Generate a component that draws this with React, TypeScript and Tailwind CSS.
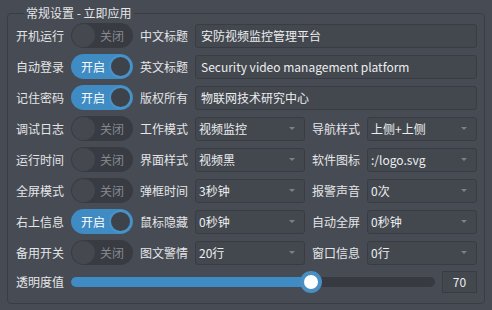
import React from 'react';

const font = { fontFamily: '"Noto Sans CJK SC", "Liberation Sans", sans-serif' };

const Switch = ({ on }: { on: boolean }) =>
  on ? (
    <div className="flex items-center justify-between w-[62px] h-[25px] rounded-full bg-[#3f8bc4] pl-[10px] pr-[1px] shrink-0">
      <span className="text-white text-[12px]">开启</span>
      <span className="w-[23px] h-[23px] rounded-full bg-[#3e424a] border-2 border-[#4a93c9]" />
    </div>
  ) : (
    <div className="flex items-center justify-between w-[62px] h-[25px] rounded-full bg-[#383b42] pl-[1px] pr-[9px] shrink-0">
      <span className="w-[23px] h-[23px] rounded-full bg-[#45484f]" />
      <span className="text-[#86898f] text-[12px]">关闭</span>
    </div>
  );

const Label = ({ text }: { text: string }) => (
  <span className="w-[48px] shrink-0 text-[12px] text-[#e4e6e8] whitespace-nowrap">{text}</span>
);

const Input = ({ value }: { value: string }) => (
  <div className="flex-1 h-[24px] flex items-center px-[5px] rounded-[3px] bg-[#43474e] border border-[#393c43] text-[12px] text-[#eceef0] whitespace-nowrap overflow-hidden">
    {value}
  </div>
);

const Combo = ({ value }: { value: string }) => (
  <div className="flex-1 h-[24px] flex items-center justify-between pl-[3px] pr-[9px] rounded-[3px] bg-[#43474e] border border-[#393c43] text-[12px] text-[#eceef0] whitespace-nowrap">
    <span>{value}</span>
    <span className="w-0 h-0 border-l-[3px] border-r-[3px] border-t-[3px] border-l-transparent border-r-transparent border-t-[#7d8087]" />
  </div>
);

const textRows = [
  { label: '开机运行', on: false, l2: '中文标题', value: '安防视频监控管理平台' },
  { label: '自动登录', on: true, l2: '英文标题', value: 'Security video management platform' },
  { label: '记住密码', on: true, l2: '版权所有', value: '物联网技术研究中心' },
];

const comboRows = [
  { label: '调试日志', on: false, l2: '工作模式', v1: '视频监控', l3: '导航样式', v2: '上侧+上侧' },
  { label: '运行时间', on: false, l2: '界面样式', v1: '视频黑', l3: '软件图标', v2: ':/logo.svg' },
  { label: '全屏模式', on: false, l2: '弹框时间', v1: '3秒钟', l3: '报警声音', v2: '0次' },
  { label: '右上信息', on: true, l2: '鼠标隐藏', v1: '0秒钟', l3: '自动全屏', v2: '0秒钟' },
  { label: '备用开关', on: false, l2: '图文警情', v1: '20行', l3: '窗口信息', v2: '0行' },
];

export default function App() {
  return (
    <div className="w-[492px] h-[310px] bg-[#474b53] pt-[5px] px-[7px]" style={font}>
      <fieldset className="border border-[#3a3d44] rounded-[4px] pl-[8px] pr-[7px] pb-[7px] h-[299px]">
        <legend className="ml-[8px] px-[2px] text-[12px] text-[#e4e6e8] leading-[16px]">常规设置 - 立即应用</legend>
        <div className="flex flex-col gap-[6px] pt-[2px]">
          {textRows.map((r) => (
            <div key={r.label} className="flex items-center gap-[7px]">
              <Label text={r.label} />
              <Switch on={r.on} />
              <Label text={r.l2} />
              <Input value={r.value} />
            </div>
          ))}
          {comboRows.map((r) => (
            <div key={r.label} className="flex items-center gap-[7px]">
              <Label text={r.label} />
              <Switch on={r.on} />
              <Label text={r.l2} />
              <Combo value={r.v1} />
              <Label text={r.l3} />
              <Combo value={r.v2} />
            </div>
          ))}
          <div className="flex items-center gap-[7px]">
            <Label text="透明度值" />
            <div className="relative flex-1 h-[22px] flex items-center">
              <div className="w-full h-[10px] rounded-full bg-[#373a41] overflow-hidden">
                <div className="h-full bg-[#3f8bc4]" style={{ width: '66%' }} />
              </div>
              <span
                className="absolute top-0 w-[22px] h-[22px] rounded-full bg-white border-[4px] border-[#4a8fc4]"
                style={{ left: 'calc(66% - 11px)' }}
              />
            </div>
            <div className="w-[35px] h-[22px] flex items-center justify-center bg-[#43474e] border border-[#393c43] text-[12px] text-[#eceef0]">
              70
            </div>
          </div>
        </div>
      </fieldset>
    </div>
  );
}
